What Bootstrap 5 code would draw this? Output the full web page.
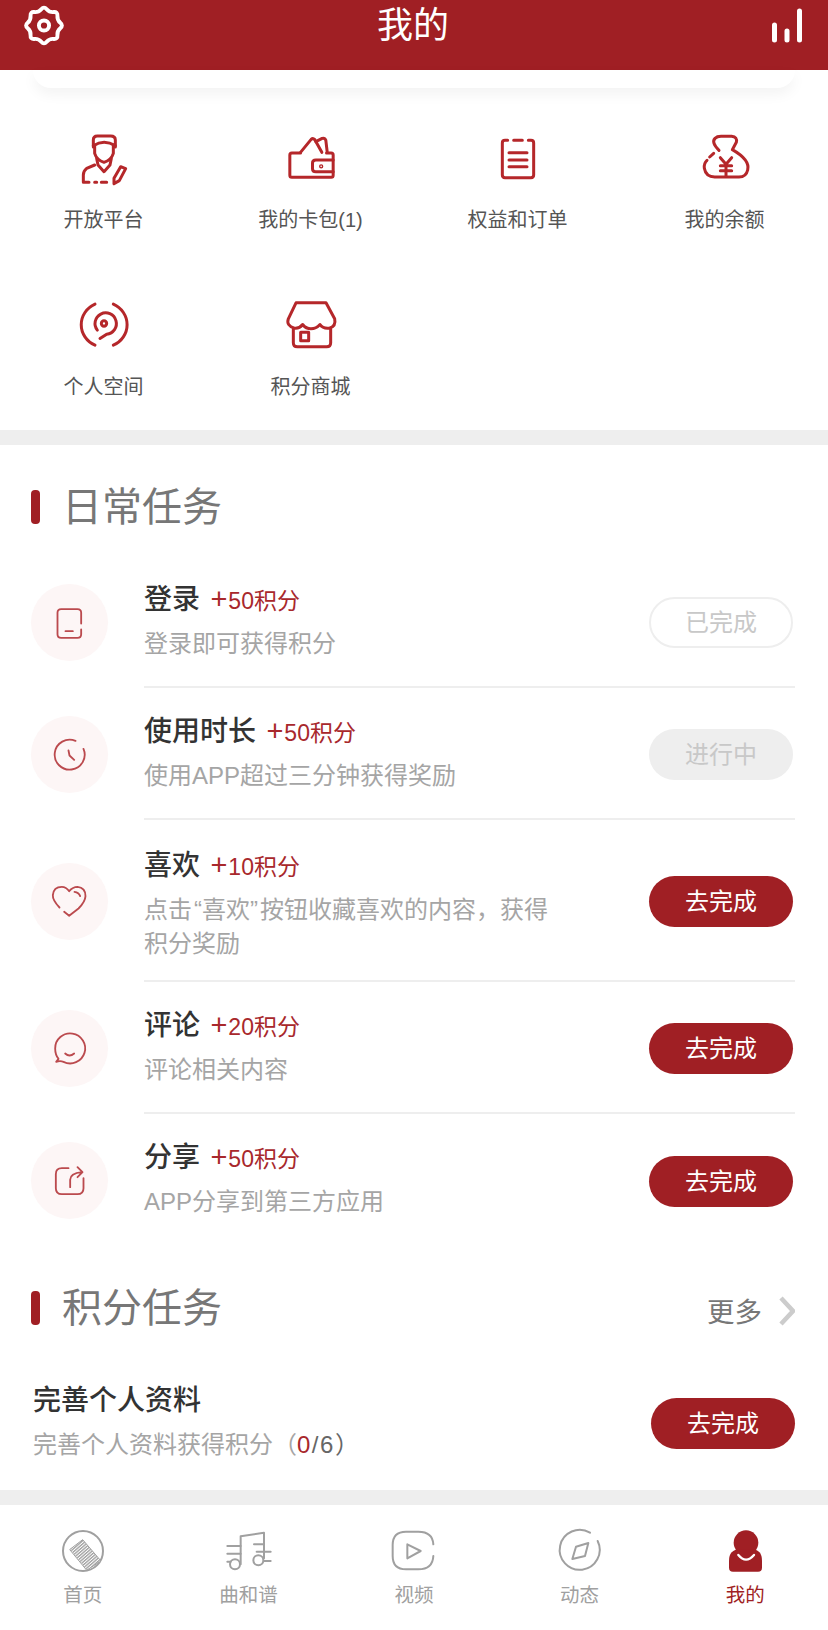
<!DOCTYPE html>
<html lang="zh-CN">
  <head>
    <meta charset="UTF-8" />
    <meta name="viewport" content="width=device-width, initial-scale=1.0" />
    <title>我的</title>
    <link href="https://cdn.jsdelivr.net/npm/bootstrap@5.3.0/dist/css/bootstrap.min.css" rel="stylesheet" />
    <style>
      body {
        background-color: #fff;
        font-family: "Liberation Sans", "Noto Sans CJK SC", sans-serif;
        color: #333;
      }
      svg {
        display: block;
        fill: none;
      }
      .top-bar {
        height: 70px;
        background-color: #a01f24;
        padding: 5px 25px 0 23px;
        color: #fff;
      }
      .top-side {
        width: 42px;
        height: 41px;
      }
      .top-title {
        font-size: 36px;
        line-height: 42px;
      }
      .card-tail {
        height: 18px;
        margin: 0 33px;
        border-radius: 0 0 20px 20px;
        box-shadow: 0 6px 14px rgba(0, 0, 0, 0.05);
      }
      .entry-grid {
        padding-top: 37px;
      }
      .entry-cell {
        height: 167px;
      }
      .entry-label {
        margin-top: 15px;
        font-size: 20px;
        line-height: 30px;
        color: #555;
      }
      .entry-icon {
        stroke: #b5272a;
        stroke-width: 9;
        stroke-linecap: round;
        stroke-linejoin: round;
      }
      .gap-band {
        height: 15px;
        background-color: #eee;
      }
      .entry-grid + .gap-band {
        margin-top: -29px;
      }
      .sec-head {
        height: 46px;
        margin-top: 39px;
        padding: 0 33px 0 31px;
        gap: 22px;
      }
      .sec-bar {
        width: 9px;
        height: 34px;
        border-radius: 4px;
        background-color: #a01f24;
      }
      .sec-title {
        font-size: 40px;
        line-height: 46px;
        color: #777;
      }
      .more-link {
        font-size: 27.5px;
        color: #777;
        gap: 17px;
        margin-top: 10px;
      }
      .more-link svg {
        margin-top: -4px;
      }
      .task-list {
        margin-top: 26px;
        margin-bottom: 1px;
        padding-left: 31px;
        padding-right: 33px;
      }
      .task-row {
        height: 132px;
        gap: 36px;
      }
      .task-tall {
        height: 162px;
      }
      .task-dot {
        width: 77px;
        height: 77px;
        border-radius: 50%;
        background-color: #fdf6f6;
        flex-shrink: 0;
        margin-top: 1px;
      }
      .task-dot svg {
        stroke: #bb4a4e;
        stroke-width: 5.5;
        stroke-linecap: round;
        stroke-linejoin: round;
      }
      .task-body {
        height: 100%;
        border-bottom: 2px solid #eee;
      }
      .task-row:last-child .task-body {
        border-bottom: 0;
      }
      .task-text {
        width: 410px;
        padding-top: 27px;
      }
      .task-tall .task-text {
        padding-top: 29px;
      }
      .task-name {
        font-size: 28px;
        line-height: 34px;
        font-weight: 500;
        color: #333;
      }
      .task-points {
        font-size: 23px;
        font-weight: 400;
        color: #a8282c;
        margin-left: 4px;
      }
      .plus-mark {
        font-size: 29px;
        line-height: 0;
        margin-right: 1px;
      }
      .task-desc {
        margin-top: 9px;
        font-size: 24px;
        line-height: 34px;
        color: #a5a5a5;
      }
      .pill-btn {
        width: 144px;
        height: 51px;
        padding: 0;
        font-size: 24px;
        line-height: 1;
        margin-top: 3px;
        margin-right: 2px;
        flex-shrink: 0;
      }
      .pill-go,
      .pill-go:hover {
        background-color: #a01f24;
        color: #fff;
        border: 0;
      }
      .pill-done,
      .pill-done:hover {
        background-color: #fff;
        color: #c8c8c8;
        border: 2px solid #eee;
      }
      .pill-wait,
      .pill-wait:hover {
        background-color: #eee;
        color: #c8c8c8;
        border: 0;
      }
      .profile-row {
        height: 159px;
        padding: 53px 33px 0;
      }
      .profile-row .task-text {
        padding-top: 0;
      }
      .profile-row .task-desc {
        margin-top: 10px;
      }
      .profile-row .pill-btn {
        margin: 14px 0 0;
      }
      .red-num {
        color: #a8282c;
        letter-spacing: 1.5px;
      }
      .dark-num {
        color: #666;
        letter-spacing: 1.5px;
      }
      .tab-strip {
        height: 126px;
        padding-top: 21px;
      }
      .tab-item {
        width: 20%;
      }
      .tab-item svg {
        stroke: #a0a0a0;
        stroke-width: 6;
        stroke-linecap: round;
        stroke-linejoin: round;
      }
      .tab-label {
        margin-top: 5px;
        font-size: 19.5px;
        line-height: 28px;
        color: #a0a0a0;
      }
      .tab-on {
        color: #a01f24;
      }
    </style>
  </head>
  <body>
    <div class="top-bar d-flex justify-content-between align-items-start">
      <div class="top-side">
        <svg width="42" height="41" viewBox="-21.5 -21 43 42" stroke="#fff" stroke-width="4">
          <path d="M16.7 -2.78 Q20 0 16.7 2.78 T13.77 9.85 T9.85 13.77 T2.78 16.7 T-2.78 16.7 T-9.85 13.77 T-13.77 9.85 T-16.7 2.78 T-16.7 -2.78 T-13.77 -9.85 T-9.85 -13.77 T-2.78 -16.7 T2.78 -16.7 T9.85 -13.77 T13.77 -9.85 T16.7 -2.78 Z" />
          <circle r="5.2" />
        </svg>
      </div>
      <div class="top-title">我的</div>
      <div class="top-side d-flex justify-content-end">
        <svg width="32" height="41" viewBox="0 0 32 41" stroke="#fff" stroke-width="5" stroke-linecap="round">
          <path d="M3.5 20 V35 M16 26 V35 M28.5 6 V35" />
        </svg>
      </div>
    </div>
    <div class="card-tail bg-white"></div>

    <div class="entry-grid row row-cols-4 g-0">
      <div class="col entry-cell d-flex flex-column align-items-center">
        <svg class="entry-icon" width="70" height="65" viewBox="-5 0 210 195">
          <path d="M68 66 V45 Q68 33 80 33 H120 Q134 33 134 45 V66" />
          <path d="M68 62 Q100 42 134 62" />
          <path d="M72 60 V85 Q78 105 100 112 Q122 105 128 85 V60" />
          <path d="M78 100 L82 120 L100 140 L118 120 L122 100" />
          <path d="M72 120 L48 130 Q38 138 38 150 V172 H55" />
          <path d="M72 172 H78 M92 172 H108" />
          <path d="M130 160 L150 125 L165 131 L146 167 L130 176 Z" />
        </svg>
        <div class="entry-label">开放平台</div>
      </div>
      <div class="col entry-cell d-flex flex-column align-items-center">
        <svg class="entry-icon" width="70" height="65" viewBox="-13.5 0 210 195">
          <path d="M60 84 H34 Q28 84 28 90 V151 Q28 157 34 157 H152 Q158 157 158 151 V90 Q158 84 152 84 H138" />
          <path d="M60 82 L92 43 Q97 38 103 44 L124 82" />
          <path d="M106 50 L125 40 Q133 38 136 46 L140 80" />
          <path d="M158 105 H106 Q96 105 96 114 V131 Q96 140 106 140 H158" />
          <circle cx="122" cy="124" r="2" />
        </svg>
        <div class="entry-label">我的卡包(1)</div>
      </div>
      <div class="col entry-cell d-flex flex-column align-items-center">
        <svg class="entry-icon" width="70" height="65" viewBox="0 0 210 195">
          <path d="M74 46 H66 Q58 46 58 54 V150 Q58 158 66 158 H144 Q152 158 152 150 V54 Q152 46 144 46 H136" />
          <path d="M92 46 H118 M78 83 H132 M78 105 H132 M78 125 H132" />
        </svg>
        <div class="entry-label">权益和订单</div>
      </div>
      <div class="col entry-cell d-flex flex-column align-items-center">
        <svg class="entry-icon" width="70" height="65" viewBox="-3 0 210 195">
          <path d="M84 76 Q60 52 72 40 Q78 34 90 34 H122 Q140 36 136 52 L124 74 Q178 105 170 135 Q165 158 140 156 H75 Q45 158 40 130 Q38 115 48 106" />
          <path d="M56 96 L68 85" />
          <path d="M88 98 L105 118 L122 98 M105 118 V152 M88 122 H122 M88 137 H122" />
        </svg>
        <div class="entry-label">我的余额</div>
      </div>
      <div class="col entry-cell d-flex flex-column align-items-center">
        <svg class="entry-icon" width="70" height="65" viewBox="205 65.5 210 195">
          <path d="M283 102 A72 68 0 0 0 283 225 M338 102 A72 68 0 0 1 338 225" />
          <path d="M298 205 L318 192 A32 32 0 1 0 290 180" />
          <circle cx="310" cy="160" r="8" />
        </svg>
        <div class="entry-label">个人空间</div>
      </div>
      <div class="col entry-cell d-flex flex-column align-items-center">
        <svg class="entry-icon" width="70" height="65" viewBox="825 67.5 210 195">
          <path d="M885 100 H975 L1001 148 Q1006 170 985 176 Q965 178 957 165 Q945 178 930 178 Q915 178 905 165 Q895 178 880 176 Q855 168 862 148 Z" />
          <path d="M877 178 V220 Q877 232 889 232 H977 Q989 232 989 220 V178" />
          <rect x="899" y="188" width="24" height="26" />
        </svg>
        <div class="entry-label">积分商城</div>
      </div>
    </div>
    <div class="gap-band"></div>

    <div class="sec-head d-flex align-items-center">
      <div class="sec-bar"></div>
      <div class="sec-title">日常任务</div>
    </div>

    <div class="task-list">
      <div class="task-row d-flex align-items-center">
        <div class="task-dot d-flex align-items-center justify-content-center">
          <svg width="77" height="77" viewBox="92.5 71.5 231 231">
            <path d="M243 190 V158 Q243 147 232 147 H183 Q172 147 172 158 V222 Q172 233 183 233 H232 Q243 233 243 222 V208 M196 213 H218" />
          </svg>
        </div>
        <div class="task-body flex-grow-1 d-flex justify-content-between align-items-center">
          <div class="task-text align-self-start">
            <div class="task-name">登录<span class="task-points"> <span class="plus-mark">+</span>50积分</span></div>
            <div class="task-desc">登录即可获得积分</div>
          </div>
          <button class="btn pill-btn pill-done rounded-pill" type="button">已完成</button>
        </div>
      </div>
      <div class="task-row d-flex align-items-center">
        <div class="task-dot d-flex align-items-center justify-content-center">
          <svg width="77" height="77" viewBox="92.5 471.5 231 231">
            <path d="M226 546 A45 45 0 1 0 250 570 M205 575 L208 590 L222 603" />
          </svg>
        </div>
        <div class="task-body flex-grow-1 d-flex justify-content-between align-items-center">
          <div class="task-text align-self-start">
            <div class="task-name">使用时长<span class="task-points"> <span class="plus-mark">+</span>50积分</span></div>
            <div class="task-desc">使用APP超过三分钟获得奖励</div>
          </div>
          <button class="btn pill-btn pill-wait rounded-pill" type="button">进行中</button>
        </div>
      </div>
      <div class="task-row task-tall d-flex align-items-center">
        <div class="task-dot d-flex align-items-center justify-content-center">
          <svg width="77" height="77" viewBox="92.5 908.5 231 231">
            <path d="M178 1042 Q157 1020 158 1005 Q160 980 185 980 Q198 980 207 993 Q218 980 232 980 Q256 982 256 1008 Q255 1025 235 1045 L207 1067 L192 1055 M223 995 Q236 997 240 1008" />
          </svg>
        </div>
        <div class="task-body flex-grow-1 d-flex justify-content-between align-items-center">
          <div class="task-text align-self-start">
            <div class="task-name">喜欢<span class="task-points"> <span class="plus-mark">+</span>10积分</span></div>
            <div class="task-desc">点击&#8202;“喜欢”&#8202;按钮收藏喜欢的内容，获得<br />积分奖励</div>
          </div>
          <button class="btn pill-btn pill-go rounded-pill" type="button">去完成</button>
        </div>
      </div>
      <div class="task-row d-flex align-items-center">
        <div class="task-dot d-flex align-items-center justify-content-center">
          <svg width="77" height="77" viewBox="92.5 149.5 231 231">
            <path d="M175 296 Q165 284 165 265 A45 45 0 1 1 190 305 Q180 301 168 305 Z M195 280 Q208 292 222 280" />
          </svg>
        </div>
        <div class="task-body flex-grow-1 d-flex justify-content-between align-items-center">
          <div class="task-text align-self-start">
            <div class="task-name">评论<span class="task-points"> <span class="plus-mark">+</span>20积分</span></div>
            <div class="task-desc">评论相关内容</div>
          </div>
          <button class="btn pill-btn pill-go rounded-pill" type="button">去完成</button>
        </div>
      </div>
      <div class="task-row d-flex align-items-center">
        <div class="task-dot d-flex align-items-center justify-content-center">
          <svg width="77" height="77" viewBox="92.5 546.5 231 231">
            <path d="M205 625 H185 Q167 625 167 643 V685 Q167 703 185 703 H232 Q250 703 250 685 V655 M210 682 V660 Q210 640 245 637 M232 622 L247 637 L232 652" />
          </svg>
        </div>
        <div class="task-body flex-grow-1 d-flex justify-content-between align-items-center">
          <div class="task-text align-self-start">
            <div class="task-name">分享<span class="task-points"> <span class="plus-mark">+</span>50积分</span></div>
            <div class="task-desc">APP分享到第三方应用</div>
          </div>
          <button class="btn pill-btn pill-go rounded-pill" type="button">去完成</button>
        </div>
      </div>
    </div>

    <div class="sec-head d-flex align-items-center">
      <div class="sec-bar"></div>
      <div class="sec-title flex-grow-1">积分任务</div>
      <div class="more-link d-flex align-items-center">
        更多
        <svg width="16" height="30" viewBox="0 0 16 30" stroke="#ccc" stroke-width="4.5">
          <path d="M2 2 L14 15 L2 28" />
        </svg>
      </div>
    </div>

    <div class="profile-row d-flex justify-content-between align-items-start">
      <div class="task-text">
        <div class="task-name">完善个人资料</div>
        <div class="task-desc">完善个人资料获得积分（<span class="red-num">0</span><span class="dark-num">/6）</span></div>
      </div>
      <button class="btn pill-btn pill-go rounded-pill" type="button">去完成</button>
    </div>

    <div class="gap-band"></div>

    <div class="tab-strip d-flex bg-white">
      <div class="tab-item d-flex flex-column align-items-center">
        <svg width="70" height="50" viewBox="141 135 210 150">
          <defs>
            <pattern id="staffLines" width="7" height="7" patternUnits="userSpaceOnUse" patternTransform="rotate(49)">
              <rect width="7" height="7" fill="#fff" stroke="none" />
              <rect width="4" height="7" fill="#a0a0a0" stroke="none" />
            </pattern>
          </defs>
          <circle cx="246" cy="210" r="60" />
          <path d="M207 205 L245 176 L300 240 L258 267 Z" fill="url(#staffLines)" stroke-width="3" />
        </svg>
        <div class="tab-label">首页</div>
      </div>
      <div class="tab-item d-flex flex-column align-items-center">
        <svg width="70" height="50" viewBox="639 135 210 150">
          <path d="M722 166 L792 155 V232 M722 166 V250" />
          <circle cx="705" cy="250" r="15" />
          <circle cx="775" cy="238" r="15" />
          <path d="M682 195 H722 M682 218 H722 M682 242 H692 M762 190 H792 M770 212 H812 M792 240 H812" />
        </svg>
        <div class="tab-label">曲和谱</div>
      </div>
      <div class="tab-item d-flex flex-column align-items-center">
        <svg width="70" height="50" viewBox="1137 135 210 150">
          <path d="M1300 190 Q1298 152 1255 152 H1218 Q1178 152 1178 192 V225 Q1178 265 1218 265 H1255 Q1298 265 1300 225" />
          <path d="M1222 190 L1262 210 L1222 232 Z" />
        </svg>
        <div class="tab-label">视频</div>
      </div>
      <div class="tab-item d-flex flex-column align-items-center">
        <svg width="70" height="50" viewBox="387 135 210 150">
          <path d="M522 155 A60 60 0 1 0 545 180" />
          <path d="M517 186 L507 225 L469 234 L480 197 Z" />
        </svg>
        <div class="tab-label">动态</div>
      </div>
      <div class="tab-item d-flex flex-column align-items-center">
        <svg width="70" height="50" viewBox="885 135 210 150">
          <circle cx="993" cy="185" r="37" fill="#a01f24" stroke="none" />
          <path d="M942 240 Q942 205 975 205 H1010 Q1041 205 1041 240 V260 Q1041 272 1029 272 H954 Q942 272 942 260 Z" fill="#a01f24" stroke="none" />
          <path d="M970 222 Q993 250 1017 222" stroke="#fff" stroke-width="7" />
        </svg>
        <div class="tab-label tab-on">我的</div>
      </div>
    </div>

    <script src="https://cdn.jsdelivr.net/npm/bootstrap@5.3.0/dist/js/bootstrap.bundle.min.js"></script>
  </body>
</html>
